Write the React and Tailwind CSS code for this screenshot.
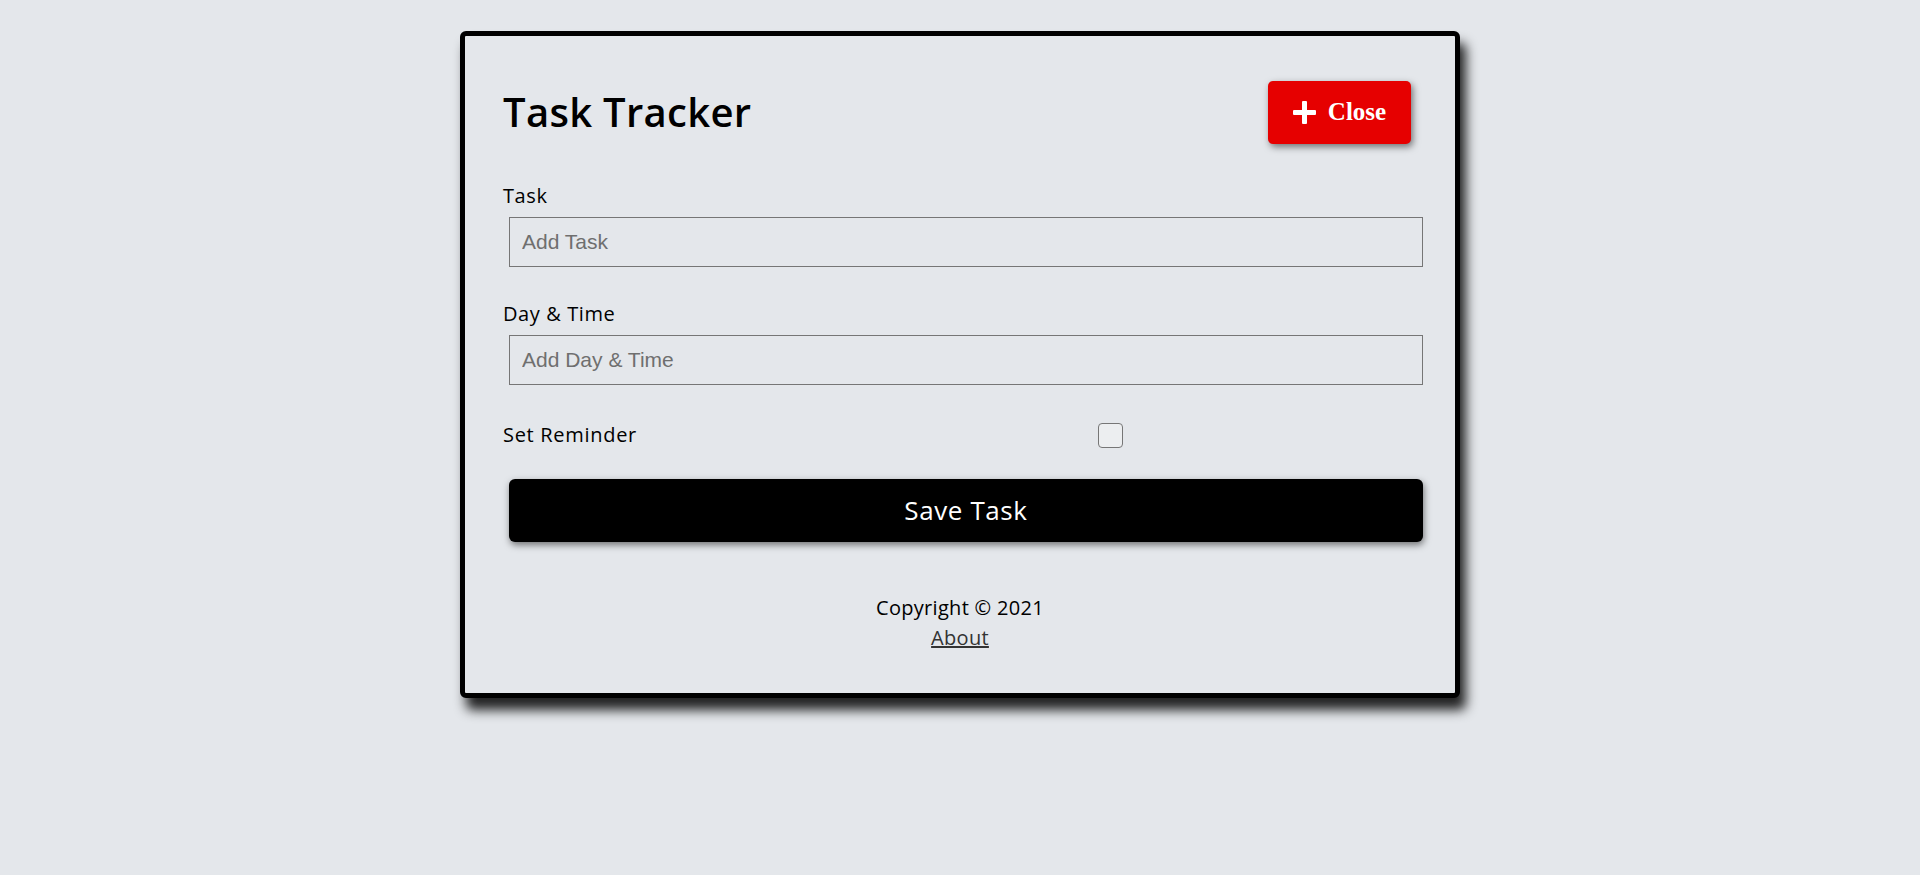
import { useState } from "react";

const sans = "font-['Open_Sans',sans-serif]";

function PlusIcon() {
  return (
    <svg width="23" height="23" viewBox="0 0 23 23" className="shrink-0">
      <rect x="9" y="0" width="5" height="23" rx="1" fill="white" />
      <rect x="0" y="9" width="23" height="5" rx="1" fill="white" />
    </svg>
  );
}

export default function App() {
  const [text, setText] = useState("");
  const [day, setDay] = useState("");
  const [reminder, setReminder] = useState(false);

  return (
    <div className={`min-h-screen bg-[#e4e7eb] text-black pt-[31px] ${sans}`}>
      <div className="mx-auto w-[1000px] rounded-[6px] border-[5px] border-black bg-[#e4e7eb] px-[38px] pb-[40px] shadow-[6px_12px_12px_rgba(0,0,0,0.85)]">
        {/* Header */}
        <header className="flex h-[76px] mt-[38px] items-center justify-between">
          <h1 className="text-[40px] font-semibold leading-none tracking-[0.3px]">
            Task Tracker
          </h1>
          <button className="mr-[6px] flex h-[63px] w-[143px] items-center justify-center gap-[12px] rounded-[5px] bg-[#e60000] font-['Liberation_Serif',serif] text-[25px] font-bold text-white shadow-[2px_3px_7px_rgba(0,0,0,0.5)]">
            <PlusIcon />
            Close
          </button>
        </header>

        {/* Form */}
        <form onSubmit={(e) => e.preventDefault()}>
          <div className="mt-[31px]">
            <label className="block text-[20px] leading-[30px] tracking-[0.6px]">Task</label>
            <input
              type="text"
              placeholder="Add Task"
              value={text}
              onChange={(e) => setText(e.target.value)}
              className="mt-[6px] ml-[6px] block h-[50px] w-full border border-[#767676] bg-transparent px-[12px] font-['Liberation_Sans',sans-serif] text-[21px] outline-none placeholder:text-[#6f6f6f]"
            />
          </div>

          <div className="mt-[32px]">
            <label className="block text-[20px] leading-[30px] tracking-[0.6px]">Day &amp; Time</label>
            <input
              type="text"
              placeholder="Add Day & Time"
              value={day}
              onChange={(e) => setDay(e.target.value)}
              className="mt-[6px] ml-[6px] block h-[50px] w-full border border-[#767676] bg-transparent px-[12px] font-['Liberation_Sans',sans-serif] text-[21px] outline-none placeholder:text-[#6f6f6f]"
            />
          </div>

          <div className="mt-[35px] flex h-[30px] items-center">
            <label className="flex-1 text-[20px] leading-[30px] tracking-[0.7px]">Set Reminder</label>
            <div className="flex flex-[2] justify-center">
              <button
                type="button"
                onClick={() => setReminder(!reminder)}
                className="-ml-[4px] h-[25px] w-[25px] rounded-[4px] border-[1.5px] border-[#767676] bg-[#eceef0]"
              >
                {reminder && <span className="block text-[16px] leading-none">✓</span>}
              </button>
            </div>
          </div>

          <button
            type="submit"
            className="mt-[29px] ml-[6px] flex h-[63px] w-full items-center justify-center rounded-[6px] bg-black text-[26px] tracking-[0.6px] text-white shadow-[1px_3px_7px_rgba(0,0,0,0.5)]"
          >
            Save Task
          </button>
        </form>

        {/* Footer */}
        <footer className="mt-[51px] text-center text-[20px] leading-[30px] tracking-[0.3px]">
          <p>Copyright &copy; 2021</p>
          <a href="#" className="text-[#333] underline">
            About
          </a>
        </footer>
      </div>
    </div>
  );
}
